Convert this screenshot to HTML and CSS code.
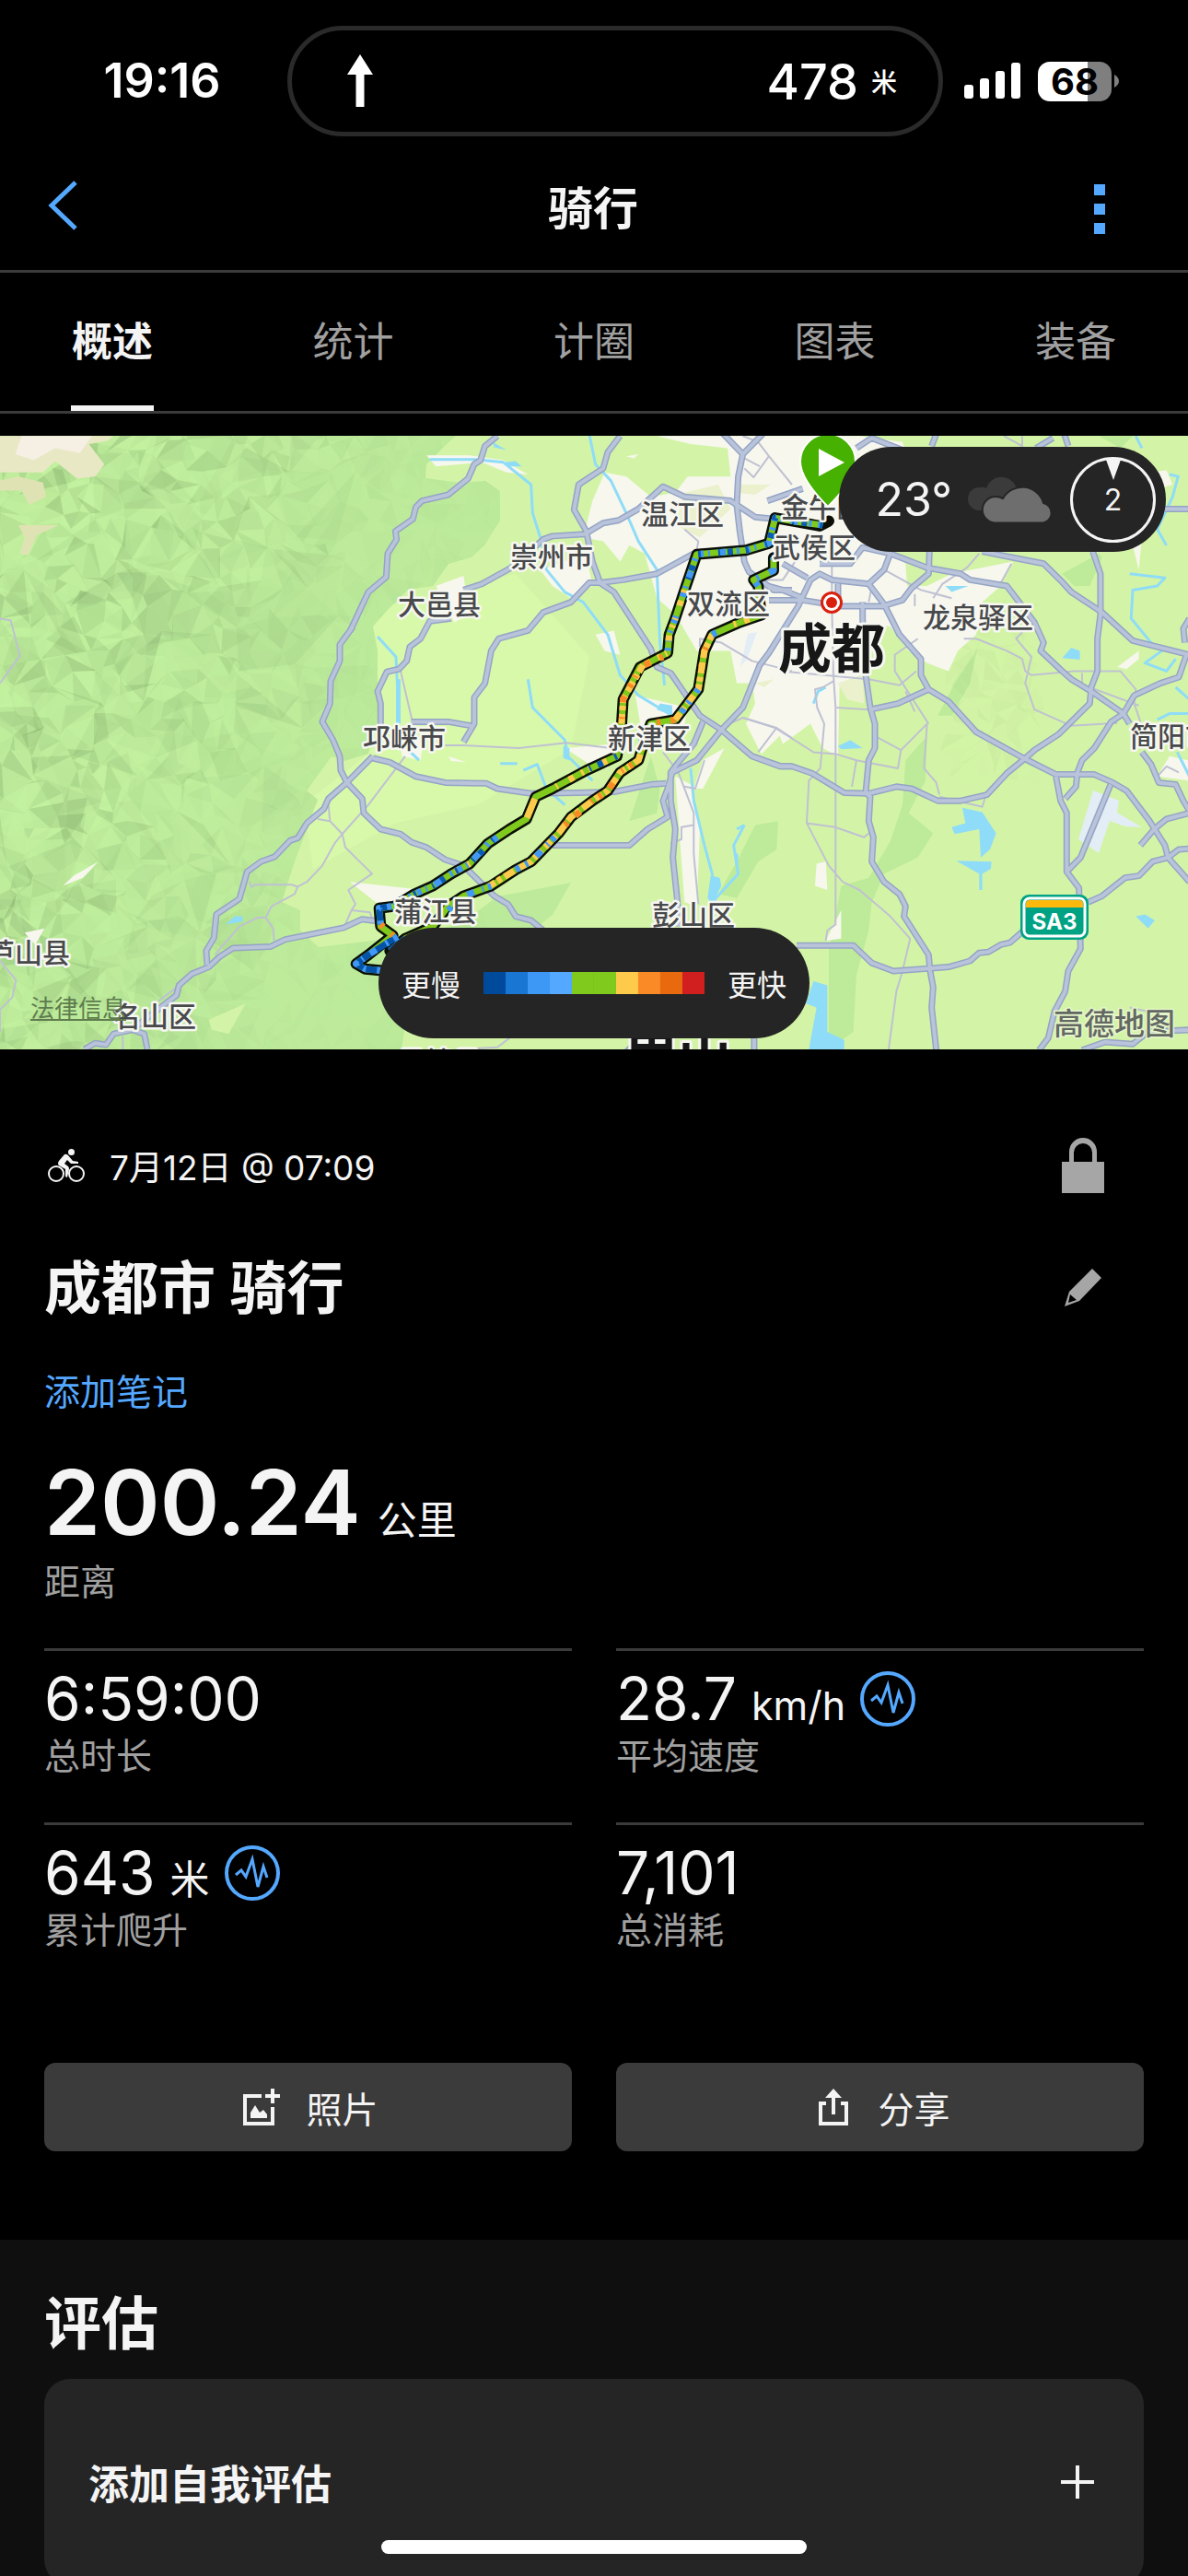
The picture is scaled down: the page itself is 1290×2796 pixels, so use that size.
FILE: index.html
```html
<!DOCTYPE html>
<html lang="zh-CN">
<head>
<meta charset="utf-8">
<meta name="viewport" content="width=device-width, initial-scale=1">
<title>骑行</title>
<link rel="stylesheet" href="styles.css">
</head>
<body>
<div class="app">
  <div class="status">
    <span class="status-time">19:16</span>
    <div class="island">
      <svg class="arrow" viewBox="0 0 30 58" aria-hidden="true"><path d="M15 0L29 22H19.500V57H10.500V22H1Z" fill="#fff"/></svg>
      <span class="island-dist">478<small>米</small></span>
    </div>
    <div class="status-right">
      <svg class="signal" viewBox="0 0 62 40" aria-hidden="true" fill="#fff"><rect x="0" y="24" width="10" height="15" rx="3"/><rect x="17" y="17" width="10" height="22" rx="3"/><rect x="34" y="9" width="10" height="30" rx="3"/><rect x="51" y="0" width="10" height="39" rx="3"/></svg>
      <span class="battery">68</span>
      <svg class="nub" viewBox="0 0 5 14" aria-hidden="true"><path d="M0 0Q5 3 5 7T0 14Z" fill="#7f7f7f"/></svg>
    </div>
  </div>

  <header class="header">
    <button class="icon-btn" aria-label="返回"><svg width="32" height="64" viewBox="0 0 32 64"><path d="M30 3L4 28L30 53" fill="none" stroke="#55a8ff" stroke-width="5"/></svg></button>
    <h1>骑行</h1>
    <button class="icon-btn end" aria-label="更多"><svg width="12" height="54" viewBox="0 0 12 54" fill="#55a8ff"><path d="M0 0h12v12H0zM0 21h12v12H0zM0 42h12v12H0z"/></svg></button>
  </header>

  <nav class="tabs">
    <a class="tab tab-on" href="#overview">概述</a>
    <a class="tab" href="#stats">统计</a>
    <a class="tab" href="#laps">计圈</a>
    <a class="tab" href="#charts">图表</a>
    <a class="tab" href="#gear">装备</a>
  </nav>

  <main id="overview">
    <section class="map">
      <svg class="map-art" viewBox="0 0 1290 666" role="img" aria-label="骑行路线地图">
        <defs>
          <clipPath id="hills"><path d="M0 0H495L482 12L463 31L462 46L500 51L527 49L543 60L543 92L526 119L512 132L487 139L470 163L443 167L420 190L405 207L410 233L410 310L400 345L374 353L360 348L333 385L345 395L320 462L306 506L326 515L326 537L346 555L430 545L500 530L570 480L620 485L600 520L500 600L440 640L436 666H0Z"/></clipPath>
          <g id="roads">
            <g transform="matrix(.3333 0 0 .44 0 -13)">
              <path d="M275 1543L310 1528L345 1532L370 1505L430 1495L470 1505L480 1543M430 1495L540 1430L575 1410L583 1385L625 1357L680 1340L715 1315L760 1293L880 1290L930 1272L1120 1243L1180 1222L1240 1228"/>
              <path d="M675 1335L672 1300L697 1268L705 1210L780 1172L805 1105L850 1080L895 1068L945 1028L970 1022L1000 985L1055 950L1070 925L1130 885L1215 820M1130 885L1110 855L1107 820L1085 780L1050 735L1075 690L1077 635L1107 585L1107 545L1150 500"/>
            </g>
            <g transform="matrix(.3333 0 0 .44 360 -13)">
              <path d="M60 512L120 415L178 378L183 320L212 285L208 265L265 235L275 205L295 190L380 175L445 135L465 100L485 90L500 55L540 30"/>
              <path d="M50 885L100 925L105 960L160 1000L225 1012L260 1032L310 1045L370 1075L430 1090L530 1165L575 1185L600 1215L650 1225L690 1250"/>
              <path d="M135 825L190 835L275 870L370 885L505 887L540 900L650 912L800 910L920 908L1040 890L1090 887"/>
              <path d="M430 785L465 740L465 675L500 640L520 560L545 530L640 510L690 465L780 440L840 392L875 392M455 745L380 735L260 735M160 760L160 690L150 660L180 612L220 605L245 585L255 550L290 530L320 487L390 480"/>
              <path d="M430 410L490 395L585 355L690 285L720 277L825 272L885 245L935 238L1000 210L1080 155L1150 180L1300 190L1380 230L1450 235"/>
              <path d="M940 30L900 70L885 110L805 150L790 212L830 265L850 340L875 392L920 415L980 485L1040 555L1060 600L1105 615L1200 720L1270 755L1370 820L1460 845L1500 845M875 392L950 385L1060 370L1180 320"/>
              <path d="M1270 755L1190 830L1110 860L1095 900L1080 930L1095 970L1030 1000L970 1040L720 1040M1210 735L1180 790L1130 835L1105 860V930L1120 1000L1112 1070L1130 1200V1240"/>
              <path d="M1270 20L1340 75L1405 25M1340 75L1325 130L1320 200L1330 265L1345 340L1360 365L1440 410L1500 410M960 1550L1000 1520M1377 1550V1515"/>
            </g>
            <g transform="matrix(.3333 0 0 .44 800 -13)">
              <path d="M-50 755L20 700L75 595L105 565L200 450L240 385L270 370L310 385L430 395L480 360L500 320"/>
              <path d="M50 820L145 845L180 845L245 862L350 910L430 912L520 895L570 900L655 930L730 930L815 915L880 862L940 825L970 805L1050 765L1150 690L1155 650L1175 610L1175 530L1185 470V370L1160 315"/>
              <path d="M215 435L340 450H475L540 435L570 405L625 370L628 315M430 395L480 445L530 520L600 580V620L625 655L690 685L780 760L935 825L1040 865L1165 865L1225 885L1270 905L1345 980L1395 1040L1405 1070L1475 1130"/>
              <path d="M100 400L150 410L215 430M105 435H215M150 345L230 380M270 345H370L410 305L500 320L620 355L730 370L760 385L880 400L910 430L970 490L1000 540L990 560L1060 610L1090 630L1155 660L1260 715L1280 740M330 395V440"/>
              <path d="M800 315L900 330L1000 345L1060 390L1090 415L1190 465L1290 535L1475 570M1465 570L1440 625L1380 640L1295 670L1260 715L1220 735L1165 800L1125 830L1110 860L1105 895L1070 925"/>
              <path d="M1040 870L1055 930L1075 960V1105L1115 1145L1120 1295L1080 1350L1070 1400L1035 1450L1015 1515L985 1545M1218 890L1120 1070L1075 1105"/>
              <path d="M410 440V480L420 620L435 700L450 740V800L430 830L420 910L435 920L430 980L445 1020L440 1080L480 1130L530 1160L550 1190L545 1215L625 1310L630 1350L640 1390L635 1440L650 1545M435 705L525 690L625 655"/>
              <path d="M195 1287H380L440 1330L510 1350L690 1340L760 1325L790 1305L820 1303L860 1285L890 1280L935 1250M1145 1180L1190 1165L1265 1120L1310 1115L1355 1080L1405 1070L1440 1050L1475 1048M1315 1040L1360 1000L1400 975L1475 960"/>
              <path d="M1320 810L1350 840L1375 885L1430 890L1455 930L1475 955M1475 480L1455 505L1460 540M1125 1545L1200 1525L1290 1530L1340 1500L1475 1495M1395 210H1475M390 60L440 35L540 65M635 55L650 25M975 60L1030 35M1065 20L1080 55M215 160L100 190"/>
            </g>
          </g>
        </defs>

        <rect width="1290" height="666" fill="#d3f4a6"/>
        <path d="M400 190L560 150L640 240L620 340L520 400L430 420L340 470L330 400L400 345Z" fill="#d8f9aa"/>
        <path d="M0 0H495L482 12L463 31L462 46L500 51L527 49L543 60L543 92L526 119L512 132L487 139L470 163L443 167L420 190L405 207L410 233L410 310L400 345L374 353L360 348L333 385L345 395L320 462L306 506L326 515L326 537L346 555L430 545L500 530L540 500L620 485L600 520L500 600L440 640L436 666H0Z" fill="#bdeb9b"/>
        <g fill="#bdeb9a" transform="matrix(.3333 0 0 .44 800 -13)">
          <path d="M550 830L620 770L615 880L560 960L640 1010L590 1070L480 1110L440 1180L430 1250L390 1360L380 1500L300 1543V1300L340 1140L430 1120L500 1030L540 940Z"/>
          <path d="M0 1080L60 990L135 980L130 1050L70 1080L0 1170L-60 1160ZM655 720L710 640L780 560L790 530L760 640L700 720ZM1060 370L1180 320L1190 330L1150 400L1100 400ZM1180 30L1290 30L1250 60ZM-350 980L-280 820L-250 900L-260 960Z"/>
        </g>
        <g clip-path="url(#hills)"><g id="relief"></g></g>
        <g id="relief-east" opacity=".45"></g>
        <g transform="matrix(.3333 0 0 .44 0 -13)">
          <path d="M0 30H370L350 42L290 50L340 100L310 130L250 135L180 92L140 120L0 120Z" fill="#e9e8c4"/>
          <path d="M0 140L60 130L140 145L150 180L95 200L70 165L0 165ZM60 250L190 250L120 275L90 325L65 320L80 280Z" fill="#dfe3b3"/>
          <path d="M70 30H300L260 72L180 60L110 90L50 75Z" fill="#f5efe4"/>
          <path d="M205 1140L240 1115L320 1080L270 1120ZM80 1255L145 1245L115 1285Z" fill="#f7f7ee"/>
          <path d="M680 1470L800 1430L745 1505L690 1495Z" fill="#d3f4a6"/>
          <path d="M735 1235L765 1215L790 1215V1228Z" fill="#8fdcf8"/>
        </g>

        <g fill="#f7f7ee">
          <g transform="matrix(.3333 0 0 .44 800 -13)">
            <path d="M-260 30H400L540 45L560 100L500 320L550 345L555 400L620 400L700 370L900 340L860 400L800 440L780 520L720 560L690 610L620 590L560 560L500 500L425 490L405 620L335 640L330 820L280 800L240 740L150 790L140 770L80 815L30 740L60 690L50 640L0 640L-20 560L-130 560L-200 470L-260 430L-300 320L-350 300L-380 340L-435 290L-500 280L-470 190L-430 120L-360 130L-280 180L-200 170L-160 130L-20 130L-30 60L-150 50Z"/>
            <path d="M1340 120L1400 115L1420 150L1370 160ZM1240 600L1310 560L1310 580L1270 605ZM1370 870L1410 820L1470 830V880ZM260 1085L290 1080L295 1150L255 1140ZM340 1200V1270L290 1275ZM1290 130L1330 200L1310 360L1290 300Z"/>
          </g>
          <g transform="matrix(.3333 0 0 .44 360 -13)">
            <path d="M310 78H450L560 90L640 125L570 120L490 95L340 105ZM680 360L830 320L850 400L780 430L720 400ZM340 400L430 375L450 470L400 490ZM990 670L1160 700L1140 780L1010 760ZM760 800L920 790L900 850L840 840ZM1120 870L1170 890L1200 1000L1190 1190L1150 1180ZM860 520L920 510L940 570L890 560ZM220 770L300 780L290 830L230 820ZM1210 830L1280 800L1210 900L1180 900ZM380 820L440 835L390 832ZM960 80L1000 75L985 85ZM60 1130L300 1150L250 1200L160 1190Z"/>
          </g>
        </g>
        <g fill="#ebf1cc" transform="matrix(.3333 0 0 .44 800 -13)"><path d="M10 150L110 150L60 175L0 170ZM-170 170L-60 150L-20 210L-120 280L-200 250ZM330 640L410 620L415 690L360 680ZM60 640L120 630L90 650Z"/></g>
        <path d="M1187 385L1215 396L1213 409L1240 425L1222 424L1205 418L1193 453L1171 438Z" fill="#e3edf5"/>
        <path d="M804 250L812 215L822 213L811 243Z" fill="#e3edf5"/>

        <g class="water">
          <g transform="matrix(.3333 0 0 .44 360 -13)">
            <path d="M320 88H470L560 95L650 150L655 220L680 280L700 360L760 415L820 440L900 520L940 620L1000 670L1110 720"/>
            <path d="M838 20L860 100L910 140L960 220L1000 290L1060 360L1070 540L1085 645M640 630L655 700L760 780L770 820L850 880M150 525L210 575L220 730M625 855L670 840L700 900L760 940M550 838H605M230 790L285 830"/>
            <path d="M1170 850L1180 930L1215 1040L1240 1110L1250 1180M1345 990L1310 1040L1325 1110L1240 1180"/>
          </g>
          <g transform="matrix(.3333 0 0 .44 800 -13)"><path d="M1410 125L1438 130L1420 180L1370 260L1400 300M1280 370L1395 380L1370 400L1290 410L1285 480L1350 540L1385 560L1330 590L1400 610L1430 580M1370 730L1410 715H1475M1430 650L1475 680M1435 810L1475 870M250 690L265 660L290 650M1300 30L1320 60M0 1000L25 990M0 1060V1090"/></g>
        </g>
        <g fill="#8fdcf8">
          <g transform="matrix(.3333 0 0 .44 800 -13)"><path d="M735 947L800 958L845 1010L825 1050L795 1070L790 1000L710 1012L700 995L745 985ZM715 1078L830 1080L828 1098L800 1110V1150H790V1110ZM330 795L370 780L410 800L340 803ZM1060 578L1090 552L1118 560V582ZM680 400L755 400L700 415ZM250 1375L295 1385V1500L350 1520V1543H235L260 1440L225 1430ZM1300 1215L1330 1210L1362 1225L1340 1245Z"/></g>
          <g transform="matrix(.3333 0 0 .44 360 -13)"><path d="M525 45L570 65L530 58ZM565 95L600 92L620 105L575 105ZM1070 690L1110 695V720L1060 705ZM755 795L775 800V830L755 825ZM1235 1115L1265 1120L1270 1140L1240 1185L1225 1170ZM210 630H225V740H210Z"/></g>
        </g>

        <g class="lanes">
          <g transform="matrix(.3333 0 0 .44 0 -13)"><path d="M0 480L35 485L65 572L0 640M0 1325L52 1372L40 1415L0 1445V1500M515 1425L575 1390M400 1543V1510M700 1310L780 1240L840 1218H865L885 1190L960 1160L970 1142L1000 1130L1050 1090L1090 1035L1115 1012L1200 940L1320 820M865 1218L890 1245L893 1275M812 1130L820 1143L830 1137H950L970 1142M1115 1012L1075 980L1070 940M1075 980L1035 975M1115 1012L1125 1045L1212 1110L1135 1150L1158 1185L1145 1200L1125 1235M1145 1200L1205 1205L1215 1225"/></g>
          <g transform="matrix(.3333 0 0 .44 360 -13)"><path d="M225 610L262 730M370 793H430L610 800L765 787L910 800M1340 30L1390 45L1425 80L1500 150M1425 80L1375 132L1345 110M1395 105L1345 85M1200 550V530L1270 540L1370 585L1500 610M1280 745L1340 725L1450 750L1500 775M1450 750L1390 810M1080 810L1130 860L1180 960V1060L1195 1185M1180 990L1140 995V1025L1105 1035M1215 830L1185 900L1150 895M1150 260L1195 290L1190 310M420 1543L540 1538L580 1515"/></g>
          <g transform="matrix(.3333 0 0 .44 800 -13)">
            <path d="M310 350V450L315 620L322 700V1235L295 1250L290 1275M315 635L280 650L255 655L262 700L285 740L272 850L235 880L228 985L320 995L415 1020L430 1010M228 985L300 1090L345 1130L400 1150L500 1215L565 1270L540 1350L520 1400L495 1543M20 725L125 750L250 810L325 815L390 830L525 850L535 805L620 740L610 850L650 885L660 915"/>
            <path d="M325 700L430 705M450 770L535 805M390 830L375 895M145 610L430 630L530 645L585 610M515 610V570L590 530M515 610L540 640L625 740M550 660L580 710M740 530H780L880 560L930 580L940 610L960 620L1100 610H1250L1300 655L1295 690L1315 735M935 510L910 530L960 575L940 640L970 705L1090 745L1240 738"/>
            <path d="M480 360L600 410L700 430M580 420V450M640 430L670 395L750 355L790 320M855 400L895 345M660 920L800 945L810 920M1150 650L1310 695M1125 615V650M1370 870L1400 845L1440 860M430 440L440 400M60 385H150L190 340M870 30L930 55L930 30M1280 1440L1340 1450"/>
          </g>
        </g>
        <use href="#roads" class="road-edge"/>
        <use href="#roads" class="road-fill"/>

        <g transform="matrix(.3333 0 0 .44 360 -13)" class="route">
          <g class="route-edge">
            <path d="M1620 240L1590 252L1520 242L1445 232L1425 295L1350 312L1190 322L1155 400L1120 480L1100 520L1095 565L1005 600L950 680L945 740L930 820L830 855L720 900L665 920L635 975L580 1000L510 1035L450 1085L390 1110L330 1140L270 1160L205 1190L155 1195L160 1240L200 1262L120 1310L80 1332L110 1345L180 1350"/>
            <path d="M190 1300L240 1270L330 1240L380 1190L430 1165L520 1140L600 1100L650 1080L740 1010L780 970L850 930L900 905L940 860L1000 830L1020 780L1040 740L1120 730L1195 655L1215 560L1240 520L1330 490L1400 472L1390 400L1375 385L1440 362V330"/>
          </g>
          <g class="route-base">
            <path d="M1600 250L1520 242L1445 232L1425 295L1350 312L1190 322L1155 400L1120 480L1100 520L1095 565L1005 600L950 680L945 740L930 820L830 855L720 900L665 920L635 975L580 1000L510 1035L450 1085L390 1110L330 1140L270 1160L205 1190L155 1195L160 1240L200 1262L120 1310L80 1332L110 1345L180 1350"/>
            <path d="M190 1300L240 1270L330 1240L380 1190L430 1165L520 1140L600 1100L650 1080L740 1010L780 970L850 930L900 905L940 860L1000 830L1020 780L1040 740L1120 730L1195 655L1215 560L1240 520L1330 490L1400 472L1390 400L1375 385L1440 362V330"/>
          </g>
          <path class="slow" d="M1600 250L1520 242L1445 232L1425 295L1350 312L1190 322L1155 400L1120 480L1100 520L1095 565"/>
          <path class="slow deep" d="M1600 250L1520 242L1445 232L1425 295L1350 312L1190 322L1155 400"/>
          <path class="quick" d="M1150 410L1120 480L1100 520L1095 565L1005 600"/>
          <path class="quick dense" d="M1015 595L950 680L945 740"/>
          <path class="fast" d="M1080 575L1005 600L950 680L945 740"/>
          <path class="quick solid" d="M662 925L637 972"/>
          <path class="quick" d="M930 820L830 855L720 900M450 1085L390 1110"/>
          <path class="slow deep" d="M930 820L830 855L800 870M530 1025L450 1085L390 1110L330 1140L270 1160L205 1190"/>
          <path class="slow" d="M540 1020L510 1035L450 1085L390 1110L330 1140L270 1160L205 1190"/>
          <path class="navy" d="M195 1190L155 1195L160 1235M215 1265L120 1310L80 1332L110 1345L180 1350M190 1300L240 1270"/>
          <path class="slow" d="M195 1190L155 1195L160 1235M215 1265L120 1310L80 1332L110 1345L180 1350"/>
          <path class="fast" d="M160 1235L200 1262"/>
          <path class="quick dense" d="M510 1142L600 1100L650 1080L740 1010L780 970L850 930L900 905L940 860L1000 830L1020 780"/>
          <path class="fast" d="M760 990L850 930L900 905L940 860L1000 830M1060 737L1120 730M1205 600L1215 560L1225 540"/>
          <path class="quick dense" d="M1120 730L1195 655L1215 560L1240 520"/>
          <path class="slow" d="M380 1200L430 1165L520 1140M600 1100L650 1080L740 1010M1140 712L1195 655M1240 520L1270 508M1390 400L1375 385L1440 362V330"/>
          <path class="quick" d="M1310 495L1400 472"/>
        </g>

        <g class="place">
          <text x="741" y="96">温江区</text><text x="599" y="142">崇州市</text><text x="477" y="194">大邑县</text>
          <text x="439" y="339">邛崃市</text><text x="705" y="339">新津区</text><text x="791" y="193">双流区</text>
          <text x="473" y="527">蒲江县</text><text x="753" y="531">彭山区</text><text x="884" y="132">武侯区</text>
          <text x="893" y="88">金牛区</text><text x="1062" y="208">龙泉驿区</text><text x="1272" y="337">简阳市</text>
          <text x="31" y="572">芦山县</text><text x="168" y="641">名山区</text><text x="477" y="690">丹棱县</text>
        </g>
        <g class="city"><text x="903" y="252">成都</text><text x="736" y="696">眉山</text></g>
        <circle cx="903" cy="181" r="12" fill="#d9200f"/><circle cx="903" cy="181" r="9" fill="#fff"/><circle cx="903" cy="181" r="6" fill="#d9200f"/>
        <rect x="1108" y="498" width="74" height="49" rx="9" fill="#00a284"/><rect x="1112" y="502" width="66" height="41" rx="6" fill="none" stroke="#fff" stroke-width="3"/><path d="M1114 512V508Q1114 504 1118 504H1172Q1176 504 1176 508V512Z" fill="#ffb80c"/>
        <text class="shield" x="1145" y="536">SA3</text>
        <text class="brand" x="1210" y="650">高德地图</text>
        <path d="M899 77Q869 47 869 28A30 30 0 0 1 929 28Q929 47 899 77Z" fill="#46b100" stroke="#fff" stroke-width="2"/><path d="M889 14L917 29L889 44Z" fill="#fff"/>
      </svg>
      <a class="legal" href="#legal">法律信息</a>
      <div class="weather">
        <span class="temp">23°</span>
        <svg width="96" height="54" viewBox="0 0 96 54" aria-hidden="true"><path d="M13 39A12.500 12.500 0 0 1 14 14Q18 13 21 15A17 17 0 0 1 53 13V39Z" fill="#3b3b3b"/><path d="M31 52.500A14 14 0 0 1 31 24Q35 24 39 26A24 24 0 0 1 83 31A11 11 0 0 1 83 52.500Z" fill="#6e6e6e" stroke="#252525" stroke-width="2"/></svg>
        <div class="wind"><svg class="wind-tip" width="16" height="24" viewBox="0 0 16 24" aria-hidden="true"><path d="M0 2Q8 -1 16 2L8 24Z" fill="#f4f4f4"/></svg>2</div>
      </div>
      <div class="legend">
        <span>更慢</span>
        <div class="scale"><i class="c1"></i><i class="c2"></i><i class="c3"></i><i class="c4"></i><i class="c5"></i><i class="c5"></i><i class="c6"></i><i class="c7"></i><i class="c8"></i><i class="c9"></i></div>
        <span>更快</span>
      </div>
    </section>

    <section class="details">
      <div class="row meta">
        <svg width="42" height="38" viewBox="0 0 42 38" aria-hidden="true"><g fill="none" stroke="#f4f4f4" stroke-width="2"><circle cx="10" cy="28" r="8"/><circle cx="32" cy="28" r="8"/></g><circle cx="26.500" cy="4.500" r="3.500" fill="#f4f4f4"/><path d="M19 7Q21 6 23 8L28 14L34 15V17L26 17L22 13L19 17L23 20Q24 21 24 23L22 32L20 31L20 23L13 19Q11 17 13 14Z" fill="#f4f4f4"/></svg>
        <time>7月12日 @ 07:09</time>
        <button class="icon-btn end" aria-label="隐私"><svg width="48" height="62" viewBox="0 0 48 62"><path d="M1 27H9V16A15 15 0 0 1 39 16V27H47V61H1ZM14 27H34V17A10 10 0 0 0 14 17Z" fill="#a6a6a6" fill-rule="evenodd"/></svg></button>
      </div>
      <div class="row title">
        <h2>成都市 骑行</h2>
        <button class="icon-btn end" aria-label="编辑"><svg width="48" height="46" viewBox="0 0 48 46"><path d="M34 1L44 11L20 36L4 42L9 26Z" fill="#a6a6a6"/><path d="M10 29L17 35L8 38Z" fill="#000"/></svg></button>
      </div>
      <a class="note" href="#note">添加笔记</a>
      <div class="distance"><strong>200.24</strong><span>公里</span></div>
      <div class="label">距离</div>
      <dl class="stats">
        <div><dd>6:59:00</dd><dt>总时长</dt></div>
        <div><dd>28.7 <small>km/h</small><svg class="pulse" viewBox="0 0 60 60" aria-hidden="true"><circle cx="30" cy="30" r="28" fill="none" stroke="#55a8ff" stroke-width="4"/><path d="M12 32L18 27L23 34L30 15L36 45L42 23L46 35" fill="none" stroke="#55a8ff" stroke-width="3"/></svg></dd><dt>平均速度</dt></div>
        <div><dd>643 <small>米</small><svg class="pulse" viewBox="0 0 60 60" aria-hidden="true"><circle cx="30" cy="30" r="28" fill="none" stroke="#55a8ff" stroke-width="4"/><path d="M12 32L18 27L23 34L30 15L36 45L42 23L46 35" fill="none" stroke="#55a8ff" stroke-width="3"/></svg></dd><dt>累计爬升</dt></div>
        <div><dd>7,101</dd><dt>总消耗</dt></div>
      </dl>
      <div class="actions">
        <button class="action"><svg width="40" height="40" viewBox="0 0 40 40" aria-hidden="true" fill="#f4f4f4"><path d="M0 6H20V10H4V36H30V20H34V40H0Z"/><path d="M30 0H34V6H40V10H34V16H30V10H24V6H30ZM8 32V26L13 18L18 26L22 23L26 28V32Z"/></svg>照片</button>
        <button class="action"><svg width="40" height="40" viewBox="-4 0 40 40" aria-hidden="true"><path d="M8 16H2V38H30V16H24M16 28V6" fill="none" stroke="#f4f4f4" stroke-width="4"/><path d="M16 0L25 10H7Z" fill="#f4f4f4"/></svg>分享</button>
      </div>
    </section>

    <section class="review">
      <h2>评估</h2>
      <button class="card">添加自我评估<svg width="36" height="36" viewBox="0 0 36 36" aria-hidden="true"><path d="M18 0V36M0 18H36" stroke="#f4f4f4" stroke-width="4"/></svg></button>
    </section>
  </main>
  <div class="home"></div>
</div>
<script src="relief.js"></script>
</body>
</html>
```
FILE: styles.css
```css
* { box-sizing: border-box; margin: 0; padding: 0; }
body { background: #000; color: #f4f4f4; font-family: Inter, "Noto Sans CJK SC", sans-serif; }
button { border: 0; background: none; color: inherit; font: inherit; cursor: pointer; }
a { color: inherit; text-decoration: none; }
svg { display: block; flex: none; }
.app { display: flex; flex-direction: column; height: 100vh; }

.status { display: grid; grid-template-columns: 312px 1fr 266px; height: 160px; padding-top: 28px; align-items: start; flex: none; }
.status-time { padding-left: 40px; text-align: center; font-size: 52px; font-weight: 600; line-height: 120px; color: #fff; }
.island { display: flex; align-items: center; justify-content: space-between; height: 120px; padding: 0 45px 0 59px; border: 5px solid #2a2a2a; border-radius: 60px; }
.arrow { width: 30px; height: 58px; }
.island-dist { display: flex; align-items: center; gap: 14px; font-size: 54px; font-weight: 500; color: #fff; }
.island-dist small { font-size: 28px; }
.status-right { display: flex; align-items: center; height: 120px; padding-left: 23px; }
.signal { width: 62px; height: 40px; }
.battery { width: 80px; height: 43px; margin: 0 3px 0 18px; border-radius: 13px; background: linear-gradient(90deg, #fff 68%, #7f7f7f 68%); color: #000; font-size: 40px; font-weight: 700; line-height: 43px; text-align: center; }
.nub { width: 5px; height: 14px; }

.header { display: grid; grid-template-columns: 1fr auto 1fr; align-items: center; height: 136px; padding: 0 90px 0 52px; border-bottom: 3px solid #3b3b3b; flex: none; }
.header { padding-left: 52px; grid-template-columns: 543px auto 1fr; }
.header h1 { font-size: 49px; font-weight: 600; line-height: 64px; }
.icon-btn { display: flex; }

.tabs { display: flex; justify-content: space-between; height: 153px; padding: 0 77px; border-bottom: 3px solid #3b3b3b; flex: none; margin-bottom: 24px; }
.tab { font-size: 44px; line-height: 150px; color: #a0a0a0; padding: 0 1px; }
.tab-on { color: #f4f4f4; font-weight: 600; border-bottom: 6px solid #f4f4f4; }

main { flex: 1; min-height: 0; overflow-y: auto; scrollbar-width: none; }

.map { position: relative; overflow: hidden; }
.map-art { width: 100%; }
.map-art path { vector-effect: non-scaling-stroke; }
.water, .lanes, .road-edge, .road-fill { fill: none; stroke-linejoin: round; }
.water { stroke: #8fdcf8; stroke-width: 3px; }
.lanes { stroke: #bfc1d2; stroke-width: 2px; }
.road-edge { stroke: #95a4c5; stroke-width: 7px; }
.road-fill { stroke: #b9c4db; stroke-width: 4px; }
.route { fill: none; stroke-linejoin: round; }
.route-edge { stroke: #0b0f08; stroke-width: 12px; stroke-linecap: round; }
.route-base { stroke: #80c91d; stroke-width: 7px; }
.slow, .quick, .fast, .navy { stroke-width: 7px; }
.slow { stroke: #4198f6; stroke-dasharray: 5 7 3 12 8 9 2 5; }
.deep { stroke: #0c5cb4; stroke-dasharray: 3 14 6 8 2 19; }
.navy { stroke: #0553a8; }
.quick { stroke: #fdca4c; stroke-dasharray: 3 9 6 14 2 6; }
.dense { stroke-dasharray: 9 3 5 4 12 5; }
.solid { stroke-dasharray: none; }
.fast { stroke: #fa8a26; stroke-dasharray: 4 11 7 16 2 8; }
.place, .city { font-family: "Noto Sans CJK SC", sans-serif; text-anchor: middle; paint-order: stroke; stroke-linejoin: round; stroke: #f7f7f2; }
.place { font-size: 30px; font-weight: 500; fill: #48494b; stroke-width: 5px; }
.city { font-size: 58px; font-weight: 700; fill: #171717; stroke-width: 6px; }
.shield { font-size: 24px; font-weight: 700; fill: #fff; text-anchor: middle; }
.brand { font-size: 33px; font-weight: 500; fill: #636863; text-anchor: middle; paint-order: stroke; stroke: #e6f6cc; stroke-width: 3px; }
.legal { position: absolute; left: 33px; bottom: 24px; font-size: 26px; line-height: 40px; color: #5f7c4e; text-decoration: underline; }
.weather { position: absolute; top: 12px; right: 24px; display: flex; align-items: center; gap: 16px; height: 114px; padding: 0 11px 0 40px; border-radius: 57px; background: #252525; }
.temp { font-size: 50px; }
.wind { position: relative; display: flex; align-items: center; justify-content: center; width: 93px; height: 93px; border: 3px solid #f4f4f4; border-radius: 50%; font-size: 32px; }
.wind-tip { position: absolute; top: -2px; }
.legend { position: absolute; bottom: 12px; left: 50%; transform: translateX(-50%); display: flex; align-items: center; gap: 25px; height: 120px; padding: 0 25px; border-radius: 60px; background: #252525; font-size: 32px; white-space: nowrap; }
.scale { display: flex; }
.scale i { width: 24px; height: 24px; }
.c1 { background: #004a9c; } .c2 { background: #1976d2; } .c3 { background: #3d98f5; } .c4 { background: #55a8ff; } .c5 { background: #80c91d; }
.c6 { background: #fdca4c; } .c7 { background: #fa8a26; } .c8 { background: #e96a0e; } .c9 { background: #d11f1f; }

.details { padding: 72px 48px 96px; }
.row { display: flex; align-items: center; padding-right: 42px; }
.end { margin-left: auto; }
.meta { height: 108px; padding-left: 3px; gap: 26px; font-size: 37px; }
.title { height: 80px; margin-top: 40px; }
.title h2, .review h2 { font-size: 62px; font-weight: 600; line-height: 80px; }
.note { display: block; margin-top: 48px; font-size: 39px; line-height: 48px; color: #55a8ff; }
.distance { display: flex; align-items: baseline; gap: 18px; height: 100px; margin-top: 46px; line-height: 100px; }
.distance strong { font-size: 98px; font-weight: 600; }
.distance span { font-size: 43px; }
.label, .stats dt { font-size: 39px; line-height: 44px; color: #a0a0a0; }
.label { margin-top: 14px; }
.stats { display: grid; grid-template-columns: 1fr 1fr; gap: 50px 48px; margin-top: 50px; }
.stats > div { display: flex; flex-direction: column; padding-top: 12px; border-top: 3px solid #3b3b3b; }
.stats dd { display: flex; align-items: baseline; gap: 16px; height: 80px; font-size: 64px; line-height: 80px; }
.stats small { font-size: 43px; }
.pulse { width: 60px; height: 60px; align-self: center; }
.actions { display: grid; grid-template-columns: 1fr 1fr; gap: 48px; margin-top: 122px; }
.action { display: flex; align-items: center; justify-content: center; gap: 28px; height: 96px; padding-left: 6px; border-radius: 12px; background: #3b3b3b; font-size: 39px; }

.review { padding: 52px 48px 0; background: #0f0f0f; }
.card { display: flex; align-items: center; justify-content: space-between; width: 100%; height: 224px; margin-top: 19px; padding: 0 54px 0 48px; border-radius: 28px; background: #252525; font-size: 44px; font-weight: 600; }
.home { position: fixed; bottom: 24px; left: 50%; width: 462px; height: 15px; transform: translateX(-50%); border-radius: 8px; background: #fff; }
```
FILE: relief.js
```js
// Shaded facets for the hilly parts of the map.
const NS = "http://www.w3.org/2000/svg";
let seed = 7;
const rand = () => (seed = (seed * 16807) % 2147483647) / 2147483647;

function facets(target, x0, y0, cols, rows, cell, strength) {
  const pts = [];
  for (let r = 0; r <= rows; r++) {
    pts.push([]);
    for (let c = 0; c <= cols; c++) {
      pts[r].push([x0 + (c + rand() * 1.3) * cell, y0 + (r + rand() * 1.3) * cell]);
    }
  }
  const add = (a, b, c) => {
    const dark = rand() < 0.6;
    const p = document.createElementNS(NS, "polygon");
    p.setAttribute("points", [a, b, c].map(q => q.map(Math.round).join(",")).join(" "));
    p.setAttribute("fill", dark ? "#76a060" : "#c6f6a2");
    p.setAttribute("fill-opacity", (Math.pow(rand(), 1.6) * (dark ? 0.3 : 0.5) * strength(a[0], a[1])).toFixed(2));
    target.appendChild(p);
  };
  for (let r = 0; r < rows; r++) {
    for (let c = 0; c < cols; c++) {
      const [a, b, d, e] = [pts[r][c], pts[r][c + 1], pts[r + 1][c], pts[r + 1][c + 1]];
      if (rand() < 0.5) { add(a, b, d); add(b, e, d); } else { add(a, b, e); add(a, e, d); }
    }
  }
}

const relief = document.getElementById("relief");
const fade = (x, y) => Math.max(0.1, Math.min(1, 1.5 - x / 330 - y / 1100));
facets(relief, -40, -40, 16, 20, 36, fade);
facets(relief, -20, -20, 32, 40, 17, fade);
facets(document.getElementById("relief-east"), 1020, 170, 7, 14, 14, () => 0.5);
```
